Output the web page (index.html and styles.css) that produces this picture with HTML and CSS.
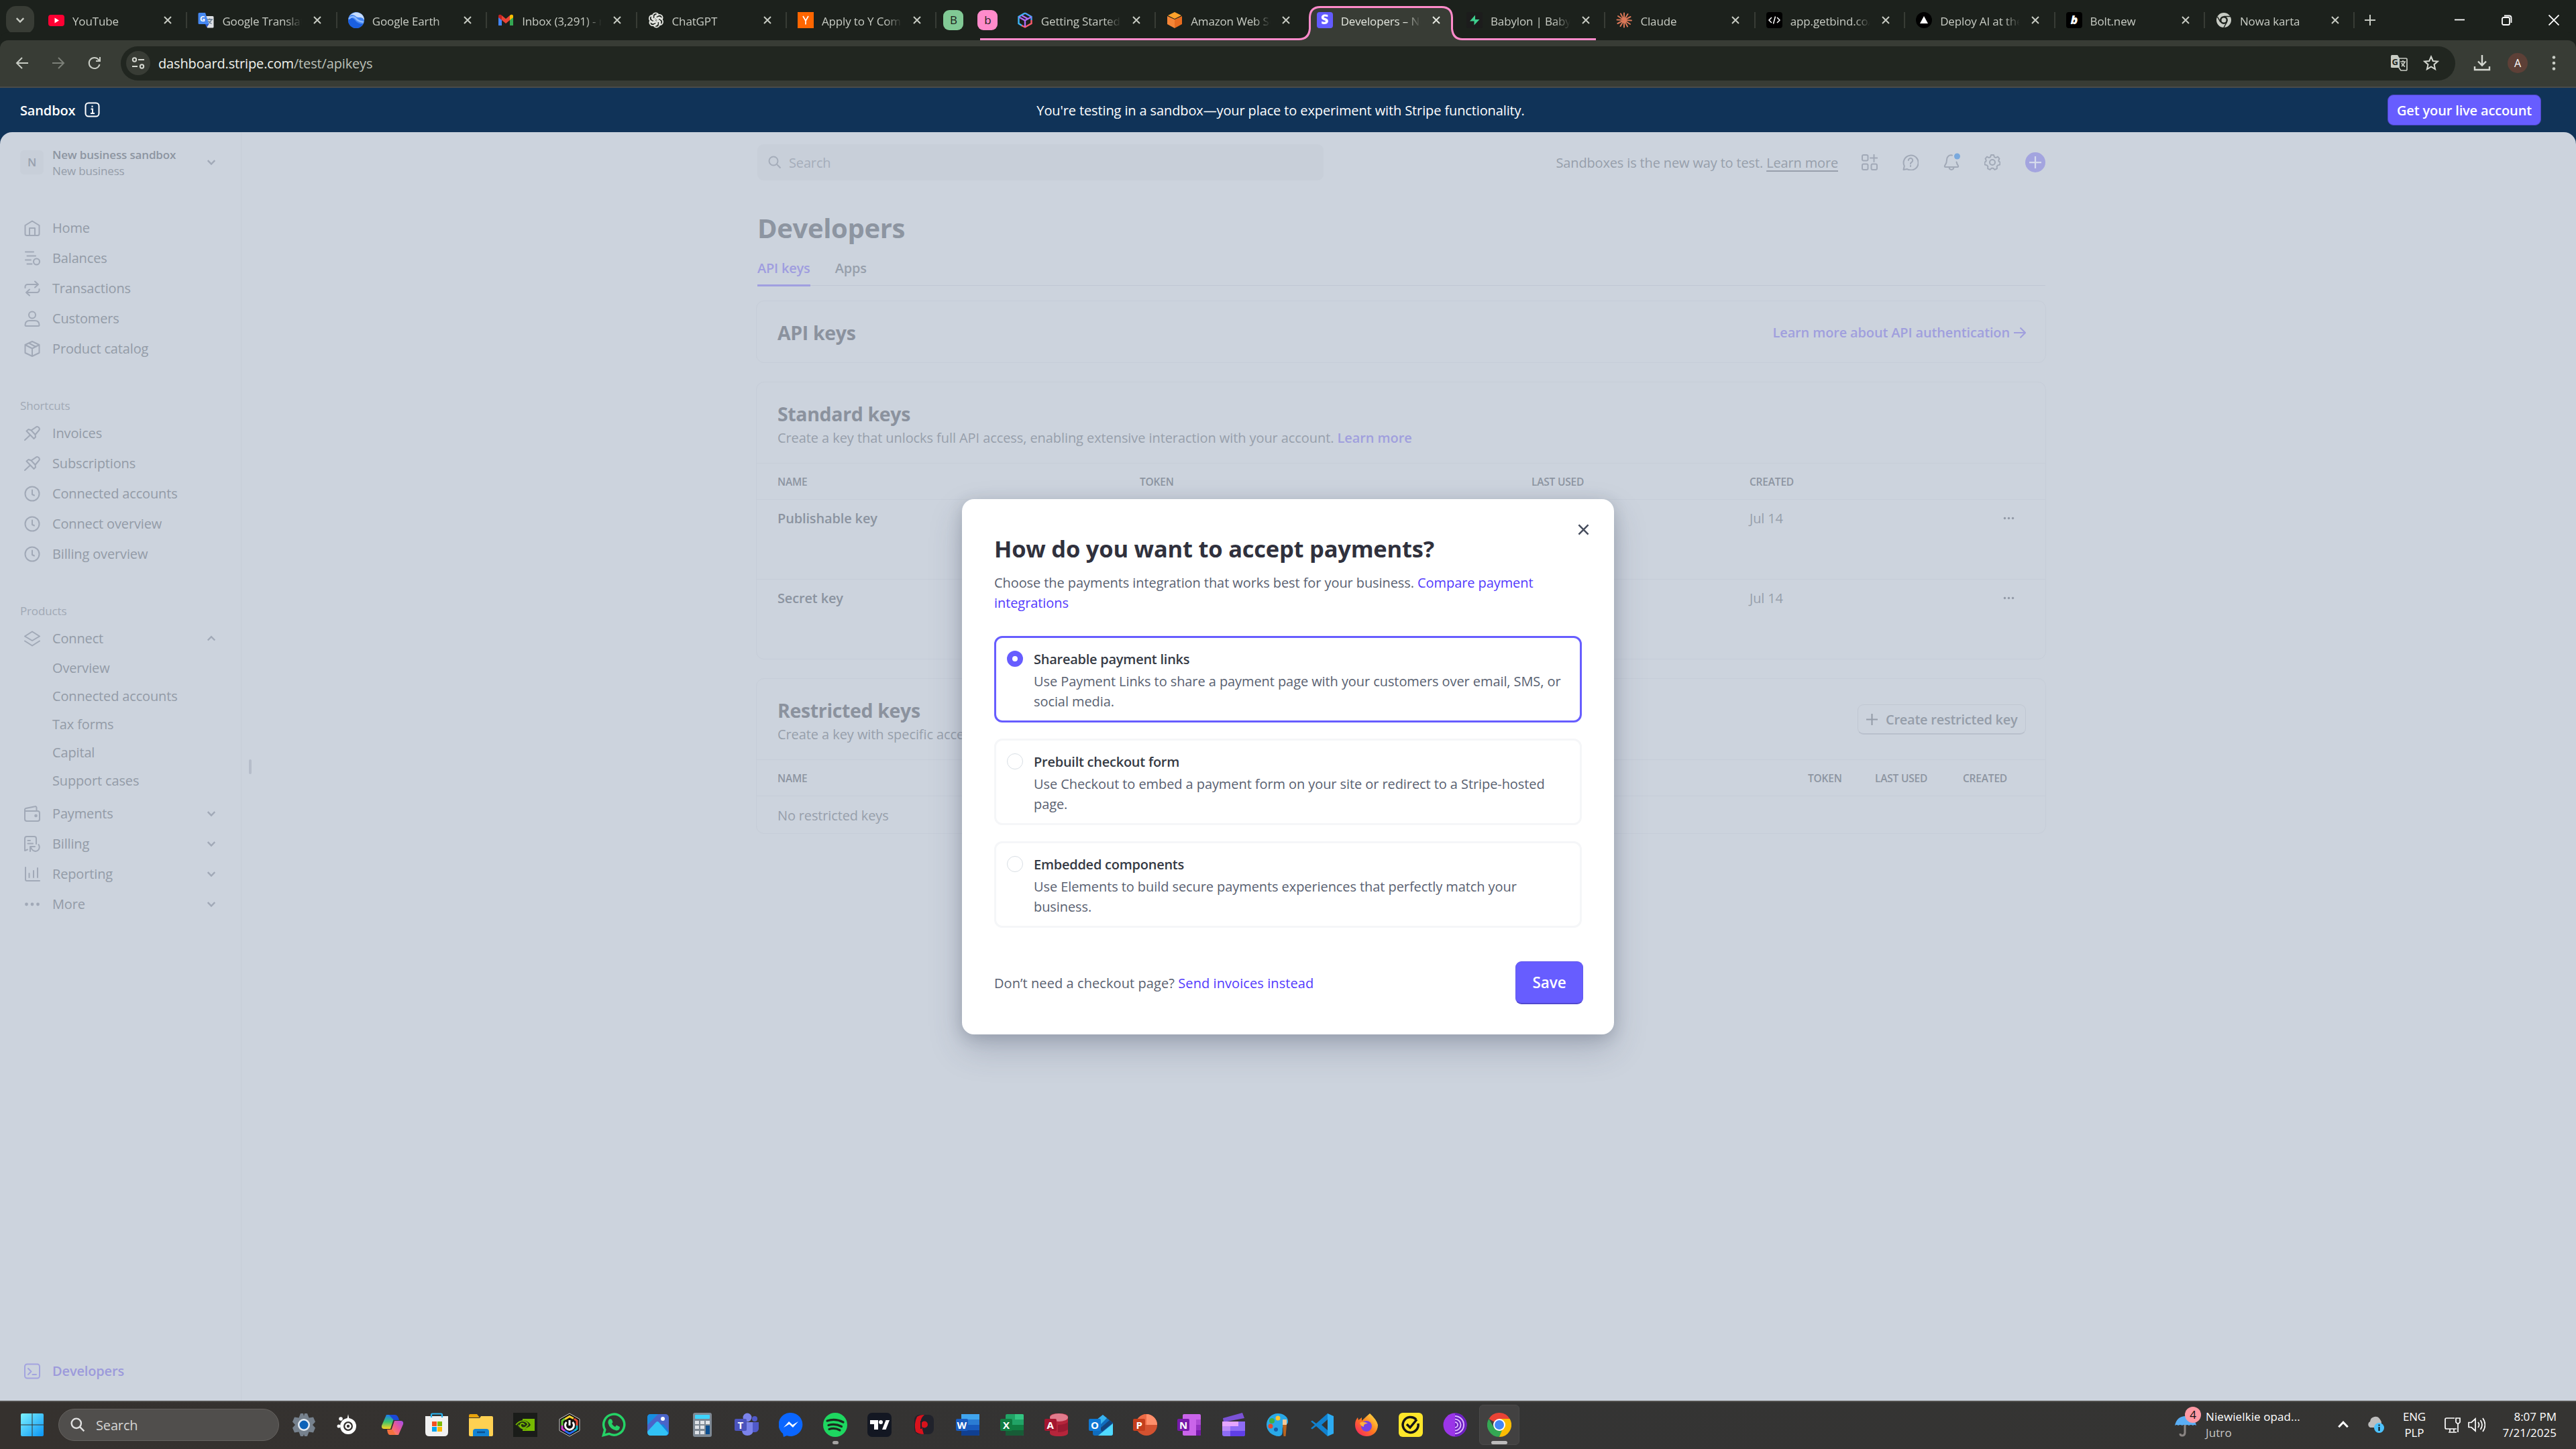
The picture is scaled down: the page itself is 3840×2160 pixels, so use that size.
FILE: index.html
```html
<!DOCTYPE html>
<html lang="en">
<head>
    <meta charset="UTF-8">
    <title>Developers – New business sandbox – Stripe</title>
    <meta name="viewport" content="width=device-width, initial-scale=1">
    <link rel="stylesheet" href="styles.css">
</head>
<body>
    <!-- shared icons -->
    <svg class="sprite" width="0" height="0">
        <symbol id="x" viewBox="0 0 12 12"><path d="M1 1l10 10M11 1L1 11"/></symbol>
        <symbol id="down" viewBox="0 0 12 12"><path d="M1.5 3.5L6 8.2l4.500-4.700"/></symbol>
        <symbol id="up" viewBox="0 0 12 12"><path d="M1.500 8.200L6 3.500l4.500 4.700"/></symbol>
        <symbol id="plus" viewBox="0 0 16 16"><path d="M8 0v16M0 8h16"/></symbol>
        <symbol id="search" viewBox="0 0 20 20"><circle cx="8" cy="8" r="6.500"/><path d="M12.800 12.800L18.500 18.500"/></symbol>
        <symbol id="pin" viewBox="0 0 24 24"><path d="M1 22l8-7.500M3.500 8.500l11 11.500 2.500-2.500-.5-3.500 5.500-6.500c1-1.200 1-3-.2-4.200s-3-1.500-4.300-.5L10.500 7.500 6.500 6z M10.500 7.500l6 6.500"/></symbol>
        <symbol id="clock" viewBox="0 0 24 24"><circle cx="12" cy="12" r="10.500"/><path d="M12 6.500v6.500l3 1.500"/></symbol>
        <symbol id="dots" viewBox="0 0 24 24"><g fill="currentColor" stroke="none"><circle cx="3.500" cy="12" r="2.400"/><circle cx="12" cy="12" r="2.400"/><circle cx="20.500" cy="12" r="2.400"/></g></symbol>
    </svg>

    <!-- browser tabs -->
    <div class="tab-strip">
        <div class="tab-list"><svg class="line" width="14" height="14"><use href="#down"/></svg></div>
        <div class="tab">
            <svg class="favicon" viewBox="0 0 24 24"><rect y="4" width="24" height="17" rx="4" fill="#ff0033"/><path d="M9.500 8.500v8l6.500-4z" fill="#fff"/></svg>
            <span>YouTube</span><svg class="close line"><use href="#x"/></svg>
        </div>
        <div class="tab">
            <svg class="favicon" viewBox="0 0 24 24"><path d="M8 6h14a1.500 1.500 0 0 1 1.500 1.500V22a1.500 1.500 0 0 1-1.500 1.500h-8z" fill="#dfe1e5"/><path d="M13 11h9M17.500 9.500V11M20.500 11c-1 3-3 5-5 6M15.500 13c1 2 3 3.500 5 4.500" stroke="#5f7389" stroke-width="1.300" fill="none"/><path d="M2 1h9l5.500 17H2a1.500 1.500 0 0 1-1.500-1.500v-14A1.500 1.500 0 0 1 2 1z" fill="#4688f1"/><path d="M11 18h5.500L13 23z" fill="#2a56c6"/><text x="3" y="14" font-size="11" font-weight="700" fill="#fff">G</text></svg>
            <span>Google Translate</span><svg class="close line"><use href="#x"/></svg>
        </div>
        <div class="tab">
            <svg class="favicon" viewBox="0 0 24 24"><circle cx="12" cy="12" r="12" fill="#4285f4"/><path d="M1.500 7C5 1 12-1 18 2c4 2 6 6 6 10-2-4-5-4-8-4-5 0-5-4-10-4-2 0-3.500 1.500-4.500 3z" fill="#c6dcff"/><path d="M0 13c3-6 7-5 10-1s7 6 12 6c-4 7-13 8-18 3-2-2-4-5-4-8z" fill="#1a5fe0"/><path d="M1 10c4-4 8-4 11 0s7 4 11 5" stroke="#8ab8ff" stroke-width="2.500" fill="none"/></svg>
            <span>Google Earth</span><svg class="close line"><use href="#x"/></svg>
        </div>
        <div class="tab">
            <svg class="favicon" viewBox="0 0 24 24"><path d="M1 6v14h5V10z" fill="#4285f4"/><path d="M23 6v14h-5V10z" fill="#34a853"/><path d="M6 5l6 5 6-5v7l-6 5-6-5z" fill="#ea4335"/><path d="M1 6c0-2.500 3-3 5-1v7L1 8z" fill="#c5221f"/><path d="M23 6c0-2.500-3-3-5-1v7l5-4z" fill="#fbbc04"/></svg>
            <span>Inbox (3,291) - mail</span><svg class="close line"><use href="#x"/></svg>
        </div>
        <div class="tab">
            <svg class="favicon" viewBox="0 0 24 24" fill="none" stroke="#e6e8e3" stroke-width="1.700"><g id="petal"><path d="M12 8L7 11V5.500A4.500 4.500 0 0 1 15 3l-4.500 2.500V12"/></g><use href="#petal" transform="rotate(60 12 12)"/><use href="#petal" transform="rotate(120 12 12)"/><use href="#petal" transform="rotate(180 12 12)"/><use href="#petal" transform="rotate(240 12 12)"/><use href="#petal" transform="rotate(300 12 12)"/></svg>
            <span>ChatGPT</span><svg class="close line"><use href="#x"/></svg>
        </div>
        <div class="tab">
            <svg class="favicon" viewBox="0 0 24 24"><path d="M0 0h24v24H0z" fill="#ff6600"/><path d="M8 6l4 7 4-7M12 13v5.500" stroke="#fff" stroke-width="1.700" fill="none"/></svg>
            <span>Apply to Y Combinator</span><svg class="close line"><use href="#x"/></svg>
        </div>
        <div class="groups"><b class="chip green">B</b><b class="chip pink">b</b></div>
        <div class="tab">
            <svg class="favicon" viewBox="0 0 24 24" fill="none" stroke-width="2.400"><path d="M12 1.500L2.500 7v10L8 20.500" stroke="#3db5f5"/><path d="M12 1.500L21.500 7v5" stroke="#4f9df7"/><path d="M21.500 12v5L12 22.500 7 20" stroke="#ff5c6c"/><path d="M3 7.500l9 5 9-5M12 12.500V22M7 5l9 5" stroke="#b06cf5"/></svg>
            <span>Getting Started | AWS</span><svg class="close line"><use href="#x"/></svg>
        </div>
        <div class="tab no-sep">
            <svg class="favicon" viewBox="0 0 24 24"><path d="M12 0l10 5-10 5L2 5z" fill="#ffa22b"/><path d="M1 6l11 5v13L1 18z" fill="#f58536"/><path d="M23 6l-11 5v13l11-6z" fill="#e86c1f"/></svg>
            <span>Amazon Web Services</span><svg class="close line"><use href="#x"/></svg>
        </div>
        <div class="tab active">
            <svg class="group-line" width="922" height="60" viewBox="0 0 922 60"><path class="fill" d="M477 60Q491 59 492 44V26Q492 10.500 507 10.500H688Q703.500 10.500 703.500 26V44Q705 59 719 60z"/><path class="stroke" d="M0 58.500H475Q490 58.500 491.500 43V26Q492 10.500 507 10.500H688Q703 10.500 703.500 26V43Q705 58.500 719 58.500H918"/></svg>
            <svg class="favicon" viewBox="0 0 24 24"><rect width="24" height="24" rx="4" fill="#635bff"/><path d="M16.300 7.300c-1.200-.6-2.600-.9-3.900-.9-1.300 0-2 .4-2 1.100 0 2 6.500 1 6.500 5.800 0 3-2.200 4.700-5.700 4.700-1.500 0-3-.3-4-.8v-3.500c1.200.7 2.700 1.100 4 1.100 1 0 1.800-.3 1.800-1.100C13 11.500 6.800 12.600 6.800 8c0-2.800 2.100-4.600 5.500-4.600 1.300 0 2.700.2 4 .7z" fill="#fff"/></svg>
            <span>Developers – New business</span><svg class="close line"><use href="#x"/></svg>
        </div>
        <div class="tab">
            <svg class="favicon" viewBox="0 0 24 24"><rect width="24" height="24" rx="3" fill="#1c1c1c"/><path d="M13 4.500L5 13.500h6.500v6L19.500 11H13z" fill="#3ecf8e"/></svg>
            <span>Babylon | Babylon AI</span><svg class="close line"><use href="#x"/></svg>
        </div>
        <div class="tab">
            <svg class="favicon" viewBox="0 0 24 24" stroke="#d97757" stroke-width="2" stroke-linecap="round"><path d="M12 12V1.500M12 12l5.500-9M12 12l9.500-5M12 12l11 .5M12 12l9 6M12 12l5 9.500M12 12v10.500M12 12l-5.500 9M12 12l-9.500 5M12 12L1.500 11.500M12 12L3 6M12 12L7 2.500"/></svg>
            <span>Claude</span><svg class="close line"><use href="#x"/></svg>
        </div>
        <div class="tab">
            <svg class="favicon" viewBox="0 0 24 24"><rect width="24" height="24" rx="4" fill="#000"/><path d="M8 8l-4 4 4 4M16 8l4 4-4 4M13.500 6.500l-3 11" stroke="#fff" stroke-width="1.500" fill="none"/></svg>
            <span>app.getbind.co/chat</span><svg class="close line"><use href="#x"/></svg>
        </div>
        <div class="tab">
            <svg class="favicon" viewBox="0 0 24 24"><circle cx="12" cy="12" r="12" fill="#000"/><path d="M12 6l6 11H6z" fill="#fff"/></svg>
            <span>Deploy AI at the speed</span><svg class="close line"><use href="#x"/></svg>
        </div>
        <div class="tab">
            <svg class="favicon" viewBox="0 0 24 24"><rect width="24" height="24" rx="4" fill="#000"/><text x="6.500" y="18" font-size="18" font-weight="800" font-style="italic" fill="#fff">b</text></svg>
            <span>Bolt.new</span><svg class="close line"><use href="#x"/></svg>
        </div>
        <div class="tab">
            <svg class="favicon" viewBox="0 0 24 24" fill="none" stroke="#c8ccc4"><circle cx="12" cy="12" r="8.500" stroke-width="5"/><circle cx="12" cy="12" r="3.500" fill="#c8ccc4" stroke="none"/><path d="M12 6.500h10M7 15L2.500 7M16.500 15L12 23" stroke="#1c211c" stroke-width="1.500"/></svg>
            <span>Nowa karta</span><svg class="close line"><use href="#x"/></svg>
        </div>
        <svg class="new-tab line" width="16" height="16"><use href="#plus"/></svg>
        <div class="window-buttons">
            <svg width="16" height="16" viewBox="0 0 16 16"><path d="M0 7.500h15"/></svg>
            <svg width="16" height="16" viewBox="0 0 16 16"><rect x="1" y="4" width="11" height="11" rx="2"/><path d="M4 1.500h7.500a3 3 0 0 1 3 3V12"/></svg>
            <svg width="16" height="16" viewBox="0 0 16 16"><path d="M.5.500l15 15M15.500.500l-15 15"/></svg>
        </div>
    </div>

    <!-- address bar -->
    <div class="toolbar">
        <svg class="nav-icon" viewBox="0 0 20 20"><path d="M19 10H2M10 2l-8 8 8 8"/></svg>
        <svg class="nav-icon off" viewBox="0 0 20 20"><path d="M1 10h17M10 2l8 8-8 8"/></svg>
        <svg class="nav-icon" viewBox="0 0 20 20"><path d="M17.500 12a8 8 0 1 1-1.500-7l2 2M18 1v6h-6"/></svg>
        <div class="omnibox">
            <div class="site-info"><svg width="20" height="20" viewBox="0 0 20 20"><circle cx="4.500" cy="5" r="2.700"/><path d="M10 5h9M1 15h8"/><circle cx="15.500" cy="15" r="2.700"/></svg></div>
            <span class="url">dashboard.stripe.com<i>/test/apikeys</i></span>
            <svg class="translate" width="26" height="26" viewBox="0 0 26 26"><path d="M2 1h9l3 5v14H2.500A1.500 1.500 0 0 1 1 18.500V2.500z" fill="#c8ccc4"/><path d="M13 6h10.500A1.500 1.500 0 0 1 25 7.500v15a1.500 1.500 0 0 1-1.500 1.500H16l-3-4M15 11h8M19 9v2M22 11c-1 3-3 5-5 7M17 13c1 2 3 4 5 5.500" fill="none" stroke="#c8ccc4" stroke-width="1.700"/><text x="2.500" y="15.500" font-size="13" font-weight="700" fill="#212620">G</text></svg>
            <svg class="star" width="24" height="24" viewBox="0 0 24 24"><path d="M12 2.500l2.800 6.500 7 .6-5.300 4.600 1.600 6.900-6.100-3.700-6.100 3.700 1.600-6.900L2.200 9.600l7-.6z"/></svg>
        </div>
        <svg class="download" width="26" height="26" viewBox="0 0 26 26"><path d="M13 1v15M7 10.500l6 6 6-6M2 18v5h22v-5"/></svg>
        <div class="avatar">A</div>
        <svg class="menu" width="6" height="24" viewBox="0 0 6 24"><circle cx="3" cy="3.500" r="2.300"/><circle cx="3" cy="12" r="2.300"/><circle cx="3" cy="20.500" r="2.300"/></svg>
    </div>

    <div class="banner">
        <div class="banner-left">Sandbox
            <svg width="24" height="24" viewBox="0 0 24 24"><rect x="1.500" y="1.500" width="20" height="20" rx="4.500"/><path d="M9.500 10.500H12v6.500M9 17h6M11.500 5.500v2.500"/></svg>
        </div>
        <div class="banner-text">You're testing in a sandbox—your place to experiment with Stripe functionality.</div>
        <button class="live-btn">Get your live account</button>
    </div>

    <div class="page">
        <aside class="sidebar">
            <div class="account">
                <div class="account-logo">N</div>
                <div class="account-name"><b>New business sandbox</b><span>New business</span></div>
                <svg class="line" width="14" height="14"><use href="#down"/></svg>
            </div>
            <nav>
                <a><svg class="ico" viewBox="0 0 24 24"><path d="M1.500 8L12 1.500 22.500 8v12.500a2.500 2.500 0 0 1-2.500 2.500H4a2.500 2.500 0 0 1-2.500-2.500zM8 23V12h8v11"/></svg>Home</a>
                <a><svg class="ico" viewBox="0 0 24 24"><path d="M2 2.500h12M4.500 8.500H17M2 14.500h8M4.500 20.500h7"/><circle cx="18.500" cy="17" r="4.500"/></svg>Balances</a>
                <a><svg class="ico" viewBox="0 0 24 24"><path d="M1.500 11V9.500a3.500 3.500 0 0 1 3.500-3.500h16M16 1.500L21 6l-5 4.500M22.500 13v1.500A3.500 3.500 0 0 1 19 18H3M8 13.500L3 18l5 4.500"/></svg>Transactions</a>
                <a><svg class="ico" viewBox="0 0 24 24"><circle cx="12" cy="6.500" r="5"/><path d="M1.500 21.500c0-4 2.500-6.500 6.500-6.500h8c4 0 6.500 2.500 6.500 6.500 0 1-.5 1.500-1.500 1.500H3c-1 0-1.500-.5-1.500-1.500z"/></svg>Customers</a>
                <a><svg class="ico" viewBox="0 0 24 24"><path d="M12 1L22.500 6v12L12 23 1.500 18V6zM1.500 6L12 11.500 22.500 6M12 11.500V23M7 3.500L17.500 9"/></svg>Product catalog</a>
            </nav>
            <h6>Shortcuts</h6>
            <nav>
                <a><svg class="ico"><use href="#pin"/></svg>Invoices</a>
                <a><svg class="ico"><use href="#pin"/></svg>Subscriptions</a>
                <a><svg class="ico"><use href="#clock"/></svg>Connected accounts</a>
                <a><svg class="ico"><use href="#clock"/></svg>Connect overview</a>
                <a><svg class="ico"><use href="#clock"/></svg>Billing overview</a>
            </nav>
            <h6>Products</h6>
            <nav>
                <a><svg class="ico" viewBox="0 0 24 24"><path d="M12 1.500L23 8.500 12 15 1 8.500zM1 15.500l11 7 11-7"/></svg>Connect<svg class="line arrow"><use href="#up"/></svg></a>
                <div class="sub"><a>Overview</a><a>Connected accounts</a><a>Tax forms</a><a>Capital</a><a>Support cases</a></div>
                <a><svg class="ico" viewBox="0 0 24 24"><path d="M1 8h19a3 3 0 0 1 3 3v9a3 3 0 0 1-3 3H4a3 3 0 0 1-3-3V6a2 2 0 0 1 1.500-2L16 1.200a2 2 0 0 1 2.500 2V8"/><circle cx="17.500" cy="15" r="1.300"/></svg>Payments<svg class="line arrow"><use href="#down"/></svg></a>
                <a><svg class="ico" viewBox="0 0 24 24"><path d="M18 12V4a3 3 0 0 0-3-3H4a3 3 0 0 0-3 3v18l4-1.500M5.500 7H9M5.500 11.500h7.500M9 23v-7h7M9.500 16.500C12 23 17 24 20 22s3.500-6 1.500-9"/></svg>Billing<svg class="line arrow"><use href="#down"/></svg></a>
                <a><svg class="ico" viewBox="0 0 24 24"><path d="M2 2v18a2 2 0 0 0 2 2h19M7.500 11v6M14 7v10M20 3v14"/></svg>Reporting<svg class="line arrow"><use href="#down"/></svg></a>
                <a><svg class="ico"><use href="#dots"/></svg>More<svg class="line arrow"><use href="#down"/></svg></a>
            </nav>
            <a class="dev"><svg class="ico" viewBox="0 0 24 24"><rect x="1" y="1.500" width="22" height="21" rx="3.500"/><path d="M6 8l4.500 4.500L6 17M12.500 17h5.500"/></svg>Developers</a>
        </aside>
        <div class="resize"></div>

        <main>
            <header>
                <div class="search"><svg class="line" width="20" height="20"><use href="#search"/></svg>Search</div>
                <p>Sandboxes is the new way to test. <u>Learn more</u></p>
                <svg class="ico" viewBox="0 0 24 24"><rect x="1" y="1" width="8.500" height="8.500" rx="2"/><rect x="1" y="14.500" width="8.500" height="8.500" rx="2"/><rect x="14.500" y="14.500" width="8.500" height="8.500" rx="2"/><path d="M18.500 0v11M13 5.500h11"/></svg>
                <svg class="ico" viewBox="0 0 24 24"><path d="M1.500 23l1.300-5.500A11 11 0 1 1 7 22z"/><path d="M8.800 9a3.200 3.200 0 1 1 5 2.700c-1.200.8-1.800 1.300-1.800 2.500M12 17v1"/></svg>
                <svg class="ico bell" viewBox="0 0 24 24"><path d="M13 1.500C8 .5 5 4 5 8.500c0 5-1.500 6-3 8.500-.5 1.500 0 2 1 2h18c1 0 1.500-.5 1-2-1-1.500-2-3-2.500-5.500M8.500 19.500c.5 4.500 6.500 4.500 7 0"/><circle class="dot" cx="20.500" cy="3" r="4.500"/></svg>
                <svg class="ico" viewBox="0 0 24 24"><circle cx="12" cy="12" r="4"/><path d="M10 1h4l1 3.200 2 .9 3-1.500 2.400 2.700-1.200 3 .6 1.500 2 1.200-.8 3.600-3 .8-1.300 1.700.2 3.200-3.300 1.600-2.400-2.200h-2.400L8.400 22.900l-3.300-1.600.2-3.200L4 16.400l-3-.8-.8-3.600 2-1.200.6-1.500-1.200-3L4 3.600l3 1.500 2-.9z"/></svg>
                <div class="add"><svg class="line" width="18" height="18"><use href="#plus"/></svg></div>
            </header>
            <h1>Developers</h1>
            <div class="tabs"><a class="on">API keys</a><a>Apps</a></div>

            <section class="card auth">
                <h2>API keys</h2>
                <a>Learn more about API authentication <svg width="18" height="18" viewBox="0 0 18 18"><path d="M0 9h16.500M9.500 1.500L17 9l-7.500 7.500"/></svg></a>
            </section>

            <section class="card">
                <div class="card-head">
                    <div><h2>Standard keys</h2><p>Create a key that unlocks full API access, enabling extensive interaction with your account. <a>Learn more</a></p></div>
                </div>
                <div class="row th standard"><span>NAME</span><span>TOKEN</span><span>LAST USED</span><span>CREATED</span></div>
                <div class="row key standard"><b>Publishable key</b><span></span><span></span><span>Jul 14</span><svg width="17" height="17"><use href="#dots"/></svg></div>
                <div class="row key standard"><b>Secret key</b><span></span><span></span><span>Jul 14</span><svg width="17" height="17"><use href="#dots"/></svg></div>
            </section>

            <section class="card">
                <div class="card-head">
                    <div><h2>Restricted keys</h2><p>Create a key with specific access limits and permissions for greater security.</p></div>
                    <button><svg class="line" width="17" height="17"><use href="#plus"/></svg>Create restricted key</button>
                </div>
                <div class="row th restricted"><span>NAME</span><span>TOKEN</span><span>LAST USED</span><span>CREATED</span></div>
                <div class="row empty">No restricted keys</div>
            </section>
        </main>

        <div class="overlay">
            <div class="modal">
                <svg class="modal-close" width="17" height="17"><use href="#x"/></svg>
                <h3>How do you want to accept payments?</h3>
                <p>Choose the payments integration that works best for your business. <a>Compare payment<br>integrations</a></p>
                <div class="option selected"><i></i><div><b>Shareable payment links</b><p>Use Payment Links to share a payment page with your customers over email, SMS, or<br>social media.</p></div></div>
                <div class="option"><i></i><div><b>Prebuilt checkout form</b><p>Use Checkout to embed a payment form on your site or redirect to a Stripe-hosted<br>page.</p></div></div>
                <div class="option"><i></i><div><b>Embedded components</b><p>Use Elements to build secure payments experiences that perfectly match your<br>business.</p></div></div>
                <footer><span>Don’t need a checkout page? <a>Send invoices instead</a></span><button>Save</button></footer>
            </div>
        </div>
    </div>

    <!-- taskbar -->
    <div class="taskbar">
        <svg class="start" width="34" height="34" viewBox="0 0 34 34"><defs><linearGradient id="win" x1="0" y1="0" x2="1" y2="1"><stop offset="0" stop-color="#7df3ff"/><stop offset="1" stop-color="#0a94f5"/></linearGradient><linearGradient id="cop" x1="0" y1="0" x2="0" y2="1"><stop offset="0" stop-color="#1a7cf0"/><stop offset=".5" stop-color="#3cc36e"/><stop offset="1" stop-color="#ffd21f"/></linearGradient><linearGradient id="cop2" x1="1" y1="0" x2="0" y2="1"><stop offset="0" stop-color="#a04cf0"/><stop offset=".5" stop-color="#ef5b8c"/><stop offset="1" stop-color="#ff9a3c"/></linearGradient><linearGradient id="ff" x1="1" y1="0" x2="0" y2="1"><stop offset="0" stop-color="#fff04a"/><stop offset=".5" stop-color="#ff7a1f"/><stop offset="1" stop-color="#f5156c"/></linearGradient></defs><path fill="url(#win)" d="M2 0h14.500v16.500H0V2q0-2 2-2zM17.500 0H32q2 0 2 2v14.500H17.500zM0 17.500h16.500V34H2q-2 0-2-2zM17.500 17.500H34V32q0 2-2 2H17.500z"/></svg>
        <div class="task-search"><svg width="22" height="22"><use href="#search"/></svg>Search</div>
        <div class="apps">
            <i><svg viewBox="0 0 36 36"><path d="M13 1h4l1 4 1-4h4l2.500 6.500L32 6.500l3 7-4 4.500 4 4.500-3 7-6.500-1L23 35h-4l-1-3-1 3h-4l-2.500-6.500L4 29.500l-3-7L5 18l-4-4.500 3-7 6.500 1z" fill="#76818d"/><circle cx="18" cy="18" r="9" fill="#e5edf5"/><circle cx="18" cy="18" r="6.500" fill="#0c62b8"/></svg></i>
            <i><svg viewBox="0 0 36 36"><circle cx="18" cy="20" r="9.500" fill="none" stroke="#fff" stroke-width="5"/><circle cx="18" cy="20" r="3.500" fill="none" stroke="#fff" stroke-width="2.500"/><path d="M16.500 9L18 2l1.500 7" fill="#fff"/><circle cx="7" cy="9" r="2.800" fill="#fff"/><circle cx="4" cy="20" r="2.500" fill="#fff"/></svg></i>
            <i><svg viewBox="0 0 36 36"><path d="M9 3h13l-7 21H6q-5 0-4-5z" fill="url(#cop)"/><path d="M13 3h9q4 0 6 8h-8z" fill="#1b49d8"/><path d="M27 33H14l7-21h9q5 0 4 5z" fill="url(#cop2)"/><path d="M23 33h-9q-3 0-4-8h8z" fill="#f4713f"/></svg></i>
            <i><svg viewBox="0 0 36 36"><path d="M1 5h34v24q0 6-6 6H7q-6 0-6-6z" fill="#f1f1f1"/><path d="M10 7V3q0-1.500 1.500-1.500h13Q26 1.500 26 3v4" fill="none" stroke="#28b4f0" stroke-width="2.200"/><path d="M11 13h7v7h-7z" fill="#f25022"/><path d="M19 13h7v7h-7z" fill="#7fba00"/><path d="M11 21h7v7h-7z" fill="#00a4ef"/><path d="M19 21h7v7h-7z" fill="#ffb900"/></svg></i>
            <i><svg viewBox="0 0 36 36"><path d="M0 4q0-2 2-2h10l4 5H0z" fill="#e8a30c"/><path d="M0 8h16l2-3h16q2 0 2 2v26q0 2-2 2H2q-2 0-2-2z" fill="#ffd152"/><path d="M6 35V28q0-4 4-4h16q4 0 4 4v7z" fill="#1383d4"/><path d="M12 29h12" stroke="#0d4f8f" stroke-width="2.500"/></svg></i>
            <i><svg viewBox="0 0 36 36"><path d="M0 0h36v36H0z" fill="#1a1c19"/><path d="M14 9h18v18H14z" fill="#76b900"/><path d="M4 18q7-9 15-6 5 2 7 6-5 8-11 7-7-1-11-7z" fill="#243212"/><path d="M4 18q7-8 14-5 4 2 4 5-5 6-9 4-4-3-1-6 3-1 5 2M8 18q6 10 17 3" fill="none" stroke="#76b900" stroke-width="1.800"/></svg></i>
            <i><svg viewBox="0 0 36 36"><path d="M18 1l15 8.500v17L18 35 3 26.500v-17z" fill="#111" stroke="#ccc"/><g fill="none" stroke-width="3"><path d="M11 9.500l7-4 6 3" stroke="#ffd52e"/><path d="M25 9l4 3v7" stroke="#e84d37"/><path d="M29 19v5l-4 3" stroke="#10b7c6"/><path d="M25 27l-7 4-7-4" stroke="#276bf2"/><path d="M11 27l-4-3v-5" stroke="#d343d0"/><path d="M7 19v-7l4-3" stroke="#62c539"/></g><path d="M13.500 14a6.500 6.500 0 1 0 9 0M18 11v8" fill="none" stroke="#fff" stroke-width="3"/></svg></i>
            <i><svg viewBox="0 0 36 36"><path d="M2.500 33.500l2.300-8.200A15.500 15.500 0 1 1 11 31.300z" fill="none" stroke="#25d366" stroke-width="3.500"/><path d="M12 9l3 1 1.500 4-1.500 2.500q2 3 5 4.500l2-2.500 5 2.500q0 5-5 5.500-10-2-12.500-11Q9 11 12 9z" fill="#25d366"/></svg></i>
            <i><svg viewBox="0 0 36 36"><rect x="2" y="2" width="32" height="32" rx="5" fill="#4a64c8"/><path d="M2 18L18 2H7Q2 2 2 7z" fill="#168de0"/><path d="M12 34l11-16q2-2 4 0l7 10q0 6-5 6z" fill="#1583dd"/><path d="M2 28l13-14q2-2 4 0l14 16q-1 4-5 4H7q-5 0-5-6z" fill="#31c2f5"/><circle cx="25" cy="9" r="3" fill="#fff"/></svg></i>
            <i><svg viewBox="0 0 36 36"><rect x="4" width="28" height="36" rx="3" fill="#7e8994"/><rect x="7" y="3" width="22" height="6" rx="1" fill="#3fd5ff"/><path d="M7 12h6v5H7zM15 12h6v5h-6zM23 12h6v5h-6zM7 19h6v5H7zM15 19h6v5h-6zM7 27h6v5H7zM15 27h6v5h-6z" fill="#dfe3e8"/><path d="M23 19h6v13h-6z" fill="#0c4f91"/></svg></i>
            <i><svg viewBox="0 0 36 36"><circle cx="19" cy="7" r="6.500" fill="#7b83eb"/><circle cx="30" cy="9" r="4" fill="#5059c9"/><path d="M11 14h17v12q-1 8-9 8-7 0-8-7z" fill="#7b83eb"/><path d="M27 14h9v10q-1 5-6 5h-3z" fill="#5059c9"/><rect y="9" width="18" height="18" rx="2" fill="#4b53bc"/><text x="4.500" y="23.500" class="glyph">T</text></svg></i>
            <i><svg viewBox="0 0 36 36"><path d="M18 0a17.500 17.500 0 1 1-6 34l-5 2-1-5A17.500 17.500 0 0 1 18 0z" fill="#0a66ff"/><path d="M7 22l8-9 5.500 5L29 13l-8 9-5.500-5z" fill="#fff"/></svg></i>
            <i class="running"><svg viewBox="0 0 36 36"><circle cx="18" cy="18" r="18" fill="#1ed760"/><path d="M6 12q12-4 24 2M8 18.500q10-3 19.500 2M9 24.500q8-3 16 1.500" fill="none" stroke="#1b2a1e" stroke-width="3.200" stroke-linecap="round"/></svg></i>
            <i><svg viewBox="0 0 36 36"><rect width="36" height="36" rx="7" fill="#131722"/><path d="M4 11h12v14h-6v-8H4zM22 25l5.500-14H33l-5.500 14z" fill="#fff"/><circle cx="20" cy="14" r="3" fill="#fff"/></svg></i>
            <i><svg viewBox="0 0 36 36"><rect x="4" y="3" width="29" height="29" rx="8" fill="#20222b"/><path d="M8 6q4-3 11-3-7 6-5 13 2 9 4 16-8 0-12-4-3-12 2-22z" fill="#d9121c"/><circle cx="19" cy="17.500" r="5" fill="#d9121c"/><path d="M14 12v12" stroke="#20222b" stroke-width="2"/></svg></i>
            <i><svg viewBox="0 0 36 36"><rect x="8" y="2" width="27" height="32" rx="2" fill="#2b7cd3"/><path d="M8 2h27v8H8z" fill="#41a5ee"/><path d="M8 18h27v8H8z" fill="#185abd"/><path d="M8 26h27v6q0 2-2 2H8z" fill="#103f91"/><rect y="9" width="18" height="18" rx="2" fill="#185abd"/><text x="1.500" y="23.500" class="glyph">W</text></svg></i>
            <i><svg viewBox="0 0 36 36"><rect x="8" y="2" width="27" height="32" rx="2" fill="#21a366"/><path d="M22 2h11q2 0 2 2v6H22z" fill="#33c481"/><path d="M8 18h27v8H8z" fill="#107c41"/><path d="M8 26h27v6q0 2-2 2H8z" fill="#185c37"/><rect y="9" width="18" height="18" rx="2" fill="#107c41"/><text x="4" y="23.500" class="glyph">X</text></svg></i>
            <i><svg viewBox="0 0 36 36"><path d="M8 6q0-5 13.500-5T35 6v24q0 5-13.500 5T8 30z" fill="#b5253b"/><ellipse cx="21.500" cy="7" rx="13.500" ry="6" fill="#e07b8c"/><path d="M20 18q10 0 15-4v11q-6 4-15 4z" fill="#9a1a31"/><rect y="9" width="18" height="18" rx="2" fill="#a4162f"/><text x="3.500" y="23.500" class="glyph">A</text></svg></i>
            <i><svg viewBox="0 0 36 36"><path d="M6 15L21 3l15 12v16q0 3-3 3H9q-3 0-3-3z" fill="#0f6cbd"/><path d="M11 11L21 3l6 5-14 14z" fill="#39b3ef"/><path d="M36 16v15q0 3-3 3H14z" fill="#50d9ff"/><path d="M36 15L20 28l-4-4 15-13z" fill="#14447d"/><rect y="9" width="18" height="18" rx="2" fill="#0f78d4"/><text x="3" y="23.500" class="glyph">O</text></svg></i>
            <i><svg viewBox="0 0 36 36"><circle cx="20" cy="18" r="16" fill="#d35230"/><path d="M20 2a16 16 0 0 1 16 16H20z" fill="#ff8f6b"/><path d="M4 18A16 16 0 0 1 20 2v16z" fill="#ed6c47"/><rect y="9" width="18" height="18" rx="2" fill="#c43e1c"/><text x="4.500" y="23.500" class="glyph">P</text></svg></i>
            <i><svg viewBox="0 0 36 36"><rect x="8" y="2" width="27" height="32" rx="2" fill="#ca64ea"/><path d="M28 10h7v8h-7z" fill="#ae4bd5"/><path d="M28 18h7v8h-7z" fill="#9332bf"/><path d="M28 26h7v6q0 2-2 2h-5z" fill="#7719aa"/><rect y="9" width="18" height="18" rx="2" fill="#7719aa"/><text x="3" y="23.500" class="glyph">N</text></svg></i>
            <i><svg viewBox="0 0 36 36"><path d="M2 8L31 0l3 8L3 14z" fill="#7b52d6"/><path d="M1 13h34v19q0 3-3 3H4q-3 0-3-3z" fill="#8e6cf5"/><path d="M1 13h24v7H1z" fill="#e5a5ff"/><path d="M1 20h12v7H1z" fill="#bd8bfa"/><path d="M13 27h22v5q0 3-3 3H13z" fill="#5f3fe8"/></svg></i>
            <i><svg viewBox="0 0 36 36"><path d="M18 1C27 1 34 7 33 14c-1 5-7 5-8 8s2 12-5 13C9 35 1 27 1 18S8 1 18 1z" fill="#29a9e8"/><circle cx="9" cy="12" r="4" fill="#3caf48"/><circle cx="18" cy="8" r="3.500" fill="#ffc52e"/><circle cx="7" cy="20" r="3.500" fill="#e64a2e"/><circle cx="15" cy="25" r="3" fill="#195ea8"/><path d="M25 10h6v8h-6z" fill="#f2c999"/><path d="M25 18h6l-1.500 17h-3z" fill="#b8641f"/></svg></i>
            <i><svg viewBox="0 0 36 36"><path d="M26 1L9 16 3 11.500 1 13l6 5-6 5 2 1.500L9 20l17 15V26l-9-8 9-8z" fill="#1181cf"/><path d="M26 1l9 4v26l-9 4z" fill="#2cabf2"/></svg></i>
            <i><svg viewBox="0 0 36 36"><path d="M23 1q10 9 12 17c0 11-8 17-17 17S1 28 1 18Q1 11 5 7l1 4 5-4v5q6-6 12-11z" fill="url(#ff)"/><circle cx="18" cy="20" r="8" fill="#7542e5"/><path d="M8 15q6-3 12 1-7 0-6 5-5-1-6-6z" fill="#ffb23e"/></svg></i>
            <i><svg viewBox="0 0 36 36"><rect width="36" height="36" rx="6" fill="#fde62a"/><path d="M26 10a11.500 11.500 0 1 0 3 6" fill="none" stroke="#161616" stroke-width="3.500"/><path d="M12 17l5 5L27 10" fill="none" stroke="#161616" stroke-width="3.500"/></svg></i>
            <i><svg viewBox="0 0 36 36"><circle cx="18" cy="18" r="17.500" fill="#9b35e8"/><path d="M18 .5a17.500 17.500 0 0 1 0 35z" fill="#6c1fc0"/><path d="M18 5a13 13 0 0 1 0 26M18 9.500a8.500 8.500 0 0 1 0 17M18 14a4 4 0 0 1 0 8" fill="none" stroke="#dcb3ff" stroke-width="2"/></svg></i>
            <i class="current"><svg viewBox="0 0 36 36"><path d="M18 18L2.400 9A18 18 0 0 1 33.600 9z" fill="#ea4335"/><path d="M18 18V9h15.600A18 18 0 0 1 18 36z" fill="#fbbc04"/><path d="M18 36A18 18 0 0 1 2.400 9L10 22l8 5 4-1z" fill="#34a853"/><circle cx="18" cy="18" r="9" fill="#fff"/><circle cx="18" cy="18" r="7" fill="#4285f4"/></svg></i>
        </div>
        <div class="tray">
            <div class="weather"><svg width="42" height="42" viewBox="0 0 42 42"><path d="M1 25Q4 11 17 11t16 14q-3-2-5 0-3-2-6 0-3-2-5 0-3-2-5 0-3-2-6 0-2-2-5 0z" fill="#5aaef5"/><path d="M16 24v12q-.5 4-4 4-3 0-3-3" fill="none" stroke="#8a8583" stroke-width="3"/></svg><em>4</em><div>Niewielkie opad...<span>Jutro</span></div></div>
            <svg class="line" width="18" height="18"><use href="#up"/></svg>
            <svg width="26" height="26" viewBox="0 0 26 26"><path d="M4 17a5 5 0 0 1 0-9 8 8 0 0 1 15-3q4 5 0 12z" fill="#bdbdbd"/><circle cx="17.500" cy="17.500" r="7.500" fill="#4cc2ff"/><path d="M17.500 16v6M17.500 12.500v2" stroke="#111" stroke-width="2"/></svg>
            <div class="lang">ENG<br>PLP</div>
            <svg class="sys" width="26" height="26" viewBox="0 0 26 26"><path d="M16 3H4a2 2 0 0 0-2 2v12a2 2 0 0 0 2 2h15M7 24h12M9 19v4M15 19v4"/><path d="M18 3h6v6l-2 2h-2l-2-2zM21 11v13"/></svg>
            <svg class="sys" width="26" height="24" viewBox="0 0 26 24"><path d="M1 8.500h4l6-5.500v18l-6-5.500H1zM15 8q3 4 0 8M18.500 5q5 7 0 14M22 2q7 10 0 20"/></svg>
            <div class="clock">8:07 PM<br>7/21/2025</div>
        </div>
    </div>
</body>
</html>
```
FILE: styles.css
```css
* { box-sizing: border-box; }
html, body {
    height: 100%;
    margin: 0;
}
body {
    display: flex;
    flex-direction: column;
    width: 3840px;
    height: 2160px;
    overflow: hidden;
    background: #103358;
    font-family: 'Open Sans', 'Noto Sans', sans-serif;
    font-size: 20px;
    letter-spacing: -0.15px;
}
h1, h2, h3, h6, p { margin: 0; }
svg { flex: none; fill: none; }
i { font-style: normal; }
button { font: inherit; letter-spacing: inherit; }
.sprite { position: absolute; }
.line { stroke: currentColor; stroke-width: 2; }

/* tabs */
.tab-strip {
    display: flex;
    align-items: center;
    height: 60px;
    flex: none;
    background: #1c211c;
    color: #c8ccc4;
    font-size: 17px;
}
.tab-list {
    display: flex;
    align-items: center;
    justify-content: center;
    width: 42px;
    height: 42px;
    margin: 0 5px 0 9px;
    border-radius: 15px;
    background: #383c35;
}
.tab {
    display: flex;
    align-items: center;
    position: relative;
    width: 223.4px;
    height: 60px;
    padding-left: 16px;
    flex: none;
}
.tab span {
    position: relative;
    width: 119px;
    margin: 2px 17px 0 12px;
    overflow: hidden;
    white-space: nowrap;
    -webkit-mask-image: linear-gradient(90deg, #000 80%, transparent);
    mask-image: linear-gradient(90deg, #000 80%, transparent);
}
.tab::after {
    content: "";
    width: 2px;
    height: 24px;
    margin-left: auto;
    background: #383c35;
}
.tab.active::after, .tab.no-sep::after { display: none; }
.tab.active { color: #e4e7df; }
.favicon { position: relative; width: 24px; height: 24px; }
.close { position: relative; width: 12px; height: 12px; }
.group-line { position: absolute; left: -486px; top: 0; z-index: 1; pointer-events: none; }
.tab.active .favicon, .tab.active span, .tab.active .close { z-index: 2; }
.group-line .fill { fill: #383c35; }
.group-line .stroke { stroke: #ff8bcb; stroke-width: 3; }
.groups { display: flex; width: 103.500px; padding-left: 10px; gap: 21px; flex: none; }
.chip {
    width: 30px;
    height: 30px;
    border-radius: 9px;
    color: #1c211c;
    font-weight: 400;
    line-height: 30px;
    text-align: center;
}
.chip.green { background: #81c995; }
.chip.pink { background: #ff8bcb; }
.new-tab { margin-left: 15px; }
.window-buttons {
    display: flex;
    gap: 54px;
    margin-left: auto;
    padding-right: 25px;
}
.window-buttons svg { stroke: #fff; stroke-width: 1.800; }

/* toolbar */
.toolbar {
    display: flex;
    align-items: center;
    height: 71px;
    flex: none;
    padding: 0 30px 1px 23px;
    background: #383c35;
    border-bottom: 2px solid #4a4b49;
    border-radius: 12px 12px 0 0;
    box-shadow: 0 -12px #1c211c;
    color: #c8ccc4;
}
.nav-icon { width: 20px; height: 20px; margin-right: 34px; stroke: #c8ccc4; stroke-width: 2; }
.nav-icon.off { stroke: #7c8078; }
.nav-icon:nth-child(3) { margin-right: 28px; }
.omnibox {
    display: flex;
    align-items: center;
    width: 3480px;
    height: 51px;
    margin-left: 1px;
    padding: 0 24px 0 8px;
    border-radius: 26px;
    background: #212620;
}
.site-info {
    display: flex;
    align-items: center;
    justify-content: center;
    width: 36px;
    height: 36px;
    border-radius: 50%;
    background: #383c35;
}
.site-info svg, .star, .download { stroke: #d5d8d1; stroke-width: 2; }
.url { margin-left: 12px; color: #f0f2ed; }
.url i { color: #bcc0b8; }
.translate { margin-left: auto; }
.star { margin-left: 23px; }
.download { margin-left: 27px; stroke-width: 2.400; }
.avatar {
    width: 30px;
    height: 30px;
    margin-left: 25px;
    border-radius: 50%;
    background: #5d4037;
    color: #fff;
    font-size: 16px;
    line-height: 30px;
    text-align: center;
}
.menu { margin-left: auto; fill: #c8ccc4; }

/* sandbox banner */
.banner {
    display: grid;
    grid-template-columns: 1fr auto 1fr;
    align-items: center;
    height: 66px;
    flex: none;
    padding: 0 52px 0 30px;
    color: #fff;
}
.banner-left { display: flex; align-items: center; gap: 14px; font-weight: 600; }
.banner-left svg { stroke: #fff; stroke-width: 2; }
.banner-text { padding-top: 1px; letter-spacing: -0.12px; }
.live-btn {
    justify-self: end;
    width: 229px;
    height: 46px;
    border: 1px solid #4d45c4;
    border-radius: 9px;
    background: #675dff;
    color: #fff;
    font-weight: 600;
    padding: 1px 0 0;
}

/* dashboard */
.page {
    position: relative;
    display: flex;
    flex: 1;
    min-height: 0;
    border-radius: 18px 18px 0 0;
    background: #ccd3dd;
    color: #979fab;
    overflow: hidden;
}
.sidebar {
    display: flex;
    flex-direction: column;
    width: 360px;
    flex: none;
    padding: 22px 37px 22px 30px;
    border-right: 1px solid #c6cdd8;
    color: #939ba7;
}
.account { display: flex; align-items: center; height: 46px; color: #a1a9b7; }
.account > svg { margin-left: auto; }
.account-logo {
    width: 35px;
    height: 36px;
    margin-right: 13px;
    border-radius: 6px;
    background: #c8cfd9;
    color: #99a1ae;
    font-size: 17px;
    font-weight: 600;
    line-height: 36px;
    text-align: center;
}
.account-name { padding-top: 1px; font-size: 17px; line-height: 24px; color: #959da9; }
.account-name b, .account-name span { display: block; }
.account-name b { font-weight: 600; color: #8d95a1; }
.sidebar nav { margin-top: 52px; }
.sidebar nav > a, .dev { display: flex; align-items: center; height: 45px; padding-left: 6px; }
.sidebar h6 {
    height: 24px;
    margin-top: 51px;
    font-size: 17px;
    font-weight: 400;
    line-height: 24px;
    color: #a1a9b5;
}
.sidebar h6 + nav { margin-top: 6px; }
.ico { width: 24px; height: 24px; margin-right: 18px; stroke: #a1a9b7; stroke-width: 2; color: #a1a9b7; stroke-linecap: round; stroke-linejoin: round; }
.arrow { width: 14px; height: 14px; margin-left: auto; color: #a1a9b7; }
.sub { padding: 1px 0 5px 48px; }
.sub a { display: block; height: 42px; line-height: 42px; }
.sidebar .dev { margin-top: auto; color: #9c9adb; font-weight: 600; }
.dev .ico { stroke: #a3a4df; }
.resize { width: 4px; height: 22px; margin: 935px 0 0 11px; border-radius: 2px; background: #b6bdca; }

main { width: 1923px; margin-left: 752px; }
header { display: flex; align-items: center; height: 54px; margin: 18px 1px 0 2px; }
.search {
    display: flex;
    align-items: center;
    gap: 11px;
    width: 844px;
    height: 54px;
    padding-left: 16px;
    border-radius: 9px;
    background: #c8cfd9;
    color: #a5adba;
}
header p { margin: 0 35px 0 auto; white-space: nowrap; }
header u { text-underline-offset: 4px; }
header .ico { margin-right: 37px; }
.bell .dot { fill: #7aa9dd; stroke: none; }
.bell { overflow: visible; }
.add {
    display: flex;
    align-items: center;
    justify-content: center;
    width: 30px;
    height: 30px;
    border-radius: 50%;
    background: #a3a4df;
    color: #d5daec;
}
h1 { height: 58px; margin: 42px 0 0 2px; font-size: 40px; line-height: 58px; letter-spacing: -0.35px; color: #8d95a1; }
.tabs {
    display: flex;
    gap: 37px;
    height: 57px;
    margin: 0 1px 0 2px;
    border-bottom: 1px solid #c0c7d4;
    line-height: 62px;
    font-weight: 600;
    letter-spacing: -0.2px;
}
.tabs a { height: 58px; }
.tabs .on { border-bottom: 3px solid #a09fe0; color: #9f9ddf; }

.card {
    margin-top: 28px;
    border: 1px solid #c6cdd8;
    border-radius: 12px;
}
.tabs + .card { margin-top: 22px; }
.card a { color: #a09fdd; font-weight: 600; }
.card h2 { font-size: 28.500px; line-height: 40px; letter-spacing: -0.35px; color: #8b929e; }
.auth { display: flex; align-items: center; justify-content: space-between; height: 93px; padding: 2px 29px 0 31px; }
.auth svg { margin-left: 1px; stroke: #a09fdd; stroke-width: 2; vertical-align: -2px; }
.card-head { display: flex; align-items: center; justify-content: space-between; height: 120px; padding: 10px 29px 0 31px; }
.card-head > div { padding-bottom: 6px; }
.card-head p { margin-top: 1px; line-height: 30px; letter-spacing: -0.08px; }
.card-head button {
    display: flex;
    align-items: center;
    gap: 12px;
    width: 251px;
    height: 45px;
    margin-bottom: 9px;
    padding: 1px 12px 0;
    border: 1px solid #c0c7d2;
    border-bottom: 2px solid #b9c0cc;
    border-radius: 9px;
    background: none;
    color: #959da9;
    font-weight: 600;
    letter-spacing: -0.25px;
    white-space: nowrap;
}
.row { display: grid; padding: 0 29px 0 31px; border-top: 1px solid #c6cdd8; }
.standard { grid-template-columns: 540px 584px 325px 1fr 36px; }
.restricted { grid-template-columns: 1536px 100px 131px 1fr; }
.th { height: 54px; line-height: 54px; font-size: 15.500px; font-weight: 600; color: #8d95a1; letter-spacing: -0.200px; }
.key { height: 119px; padding-top: 13px; line-height: 30px; }
.key b { font-weight: 600; color: #8b93a0; }
.key svg { justify-self: start; margin: 6px 0 0 2px; color: #929aa7; }
.empty { height: 56px; line-height: 57px; }

/* payment modal */
.overlay {
    position: absolute;
    inset: 0;
    display: flex;
    align-items: center;
    justify-content: center;
}
.modal {
    position: relative;
    width: 972px;
    height: 798px;
    padding: 49px 48px 0;
    border-radius: 18px;
    background: #fff;
    color: #596171;
    letter-spacing: -0.08px;
    box-shadow: 0 22px 50px rgba(48, 60, 90, 0.22), 0 5px 22px rgba(40, 50, 60, 0.2);
}
.modal-close { position: absolute; top: 37px; right: 37px; stroke: #474e5e; stroke-width: 1.800; }
.modal h3 { height: 50px; font-size: 34.500px; line-height: 50px; letter-spacing: -0.22px; color: #30313d; }
.modal p { line-height: 30.500px; }
.modal > p { height: 62px; margin-top: 11px; }
.modal a { color: #533afd; }
.option {
    display: flex;
    width: 876px;
    height: 129px;
    margin-top: 24px;
    padding: 18px 0 0 17px;
    border: 3px solid #f5f6f8;
    border-radius: 12px;
}
.modal > p + .option { margin-top: 32px; }
.option.selected { border-color: #675dff; }
.option > i {
    width: 24px;
    height: 24px;
    margin: 1px 16px 0 -1px;
    border: 1.500px solid #d8dee4;
    border-radius: 50%;
}
.option.selected > i { border: 8px solid #675dff; }
.option b { display: block; height: 32px; line-height: 27px; font-weight: 600; color: #353a44; letter-spacing: -0.25px; }
.modal footer { display: flex; align-items: center; justify-content: space-between; height: 64px; margin: 50px -2px 0 0; }
.modal footer span { letter-spacing: 0.08px; padding-top: 1px; }
.modal footer button {
    width: 101px;
    height: 64px;
    border: 1px solid #6259ea;
    border-bottom: 2px solid #5148cf;
    border-radius: 9px;
    background: #675dff;
    color: #fff;
    font-size: 22.500px;
    font-weight: 600;
}

/* taskbar */
.taskbar {
    display: flex;
    align-items: center;
    height: 72px;
    flex: none;
    padding: 0 0 2px 31px;
    border-top: 2px solid #504e4c;
    background: linear-gradient(90deg, #35312e, #343434 50%, #353432);
    color: #fff;
}
.task-search {
    display: flex;
    align-items: center;
    gap: 16px;
    width: 329px;
    height: 48px;
    margin-left: 22px;
    padding-left: 17px;
    border: 1px solid #65625f;
    border-radius: 24px;
    background: #504e4c;
    color: #d6d5d4;
}
.task-search svg { stroke: #e0e0e0; stroke-width: 2.200; }
.apps { display: flex; margin-left: 4px; }
.apps i { display: flex; position: relative; align-items: center; justify-content: center; width: 66px; height: 60px; }
.apps svg { width: 36px; height: 36px; }
.apps .glyph { font-size: 15px; font-weight: 700; fill: #fff; letter-spacing: 0; }
.apps .running::after, .apps .current::after {
    content: "";
    position: absolute;
    bottom: 1px;
    width: 9px;
    height: 5px;
    border-radius: 3px;
    background: #a5a3a2;
}
.apps .current::after { width: 24px; background: #bdbcbc; }
.apps .current::before {
    content: "";
    position: absolute;
    inset: 0 3px;
    border: 1px solid #4b4a4a;
    border-radius: 6px;
    background: #424141;
}
.apps .current svg { position: relative; }
.tray { display: flex; align-items: center; margin-left: auto; padding-right: 29px; font-size: 17px; line-height: 24px; }
.weather { display: flex; position: relative; width: 243px; gap: 5px; white-space: nowrap; }
.weather div { letter-spacing: 0.1px; }
.weather span { display: block; color: #c6c6c6; }
.weather em {
    position: absolute;
    left: 16px;
    top: -3px;
    width: 24px;
    height: 24px;
    border-radius: 50%;
    background: #ff99a4;
    color: #111;
    font-style: normal;
    text-align: center;
}
.tray > svg:nth-of-type(2) { margin-left: 27px; }
.lang { width: 36px; margin: 0 26px; text-align: center; }
.sys { stroke: #fff; stroke-width: 1.700; }
.sys + .sys { margin-left: 10px; }
.tray .clock { width: 106px; text-align: right; letter-spacing: 0; }
```
